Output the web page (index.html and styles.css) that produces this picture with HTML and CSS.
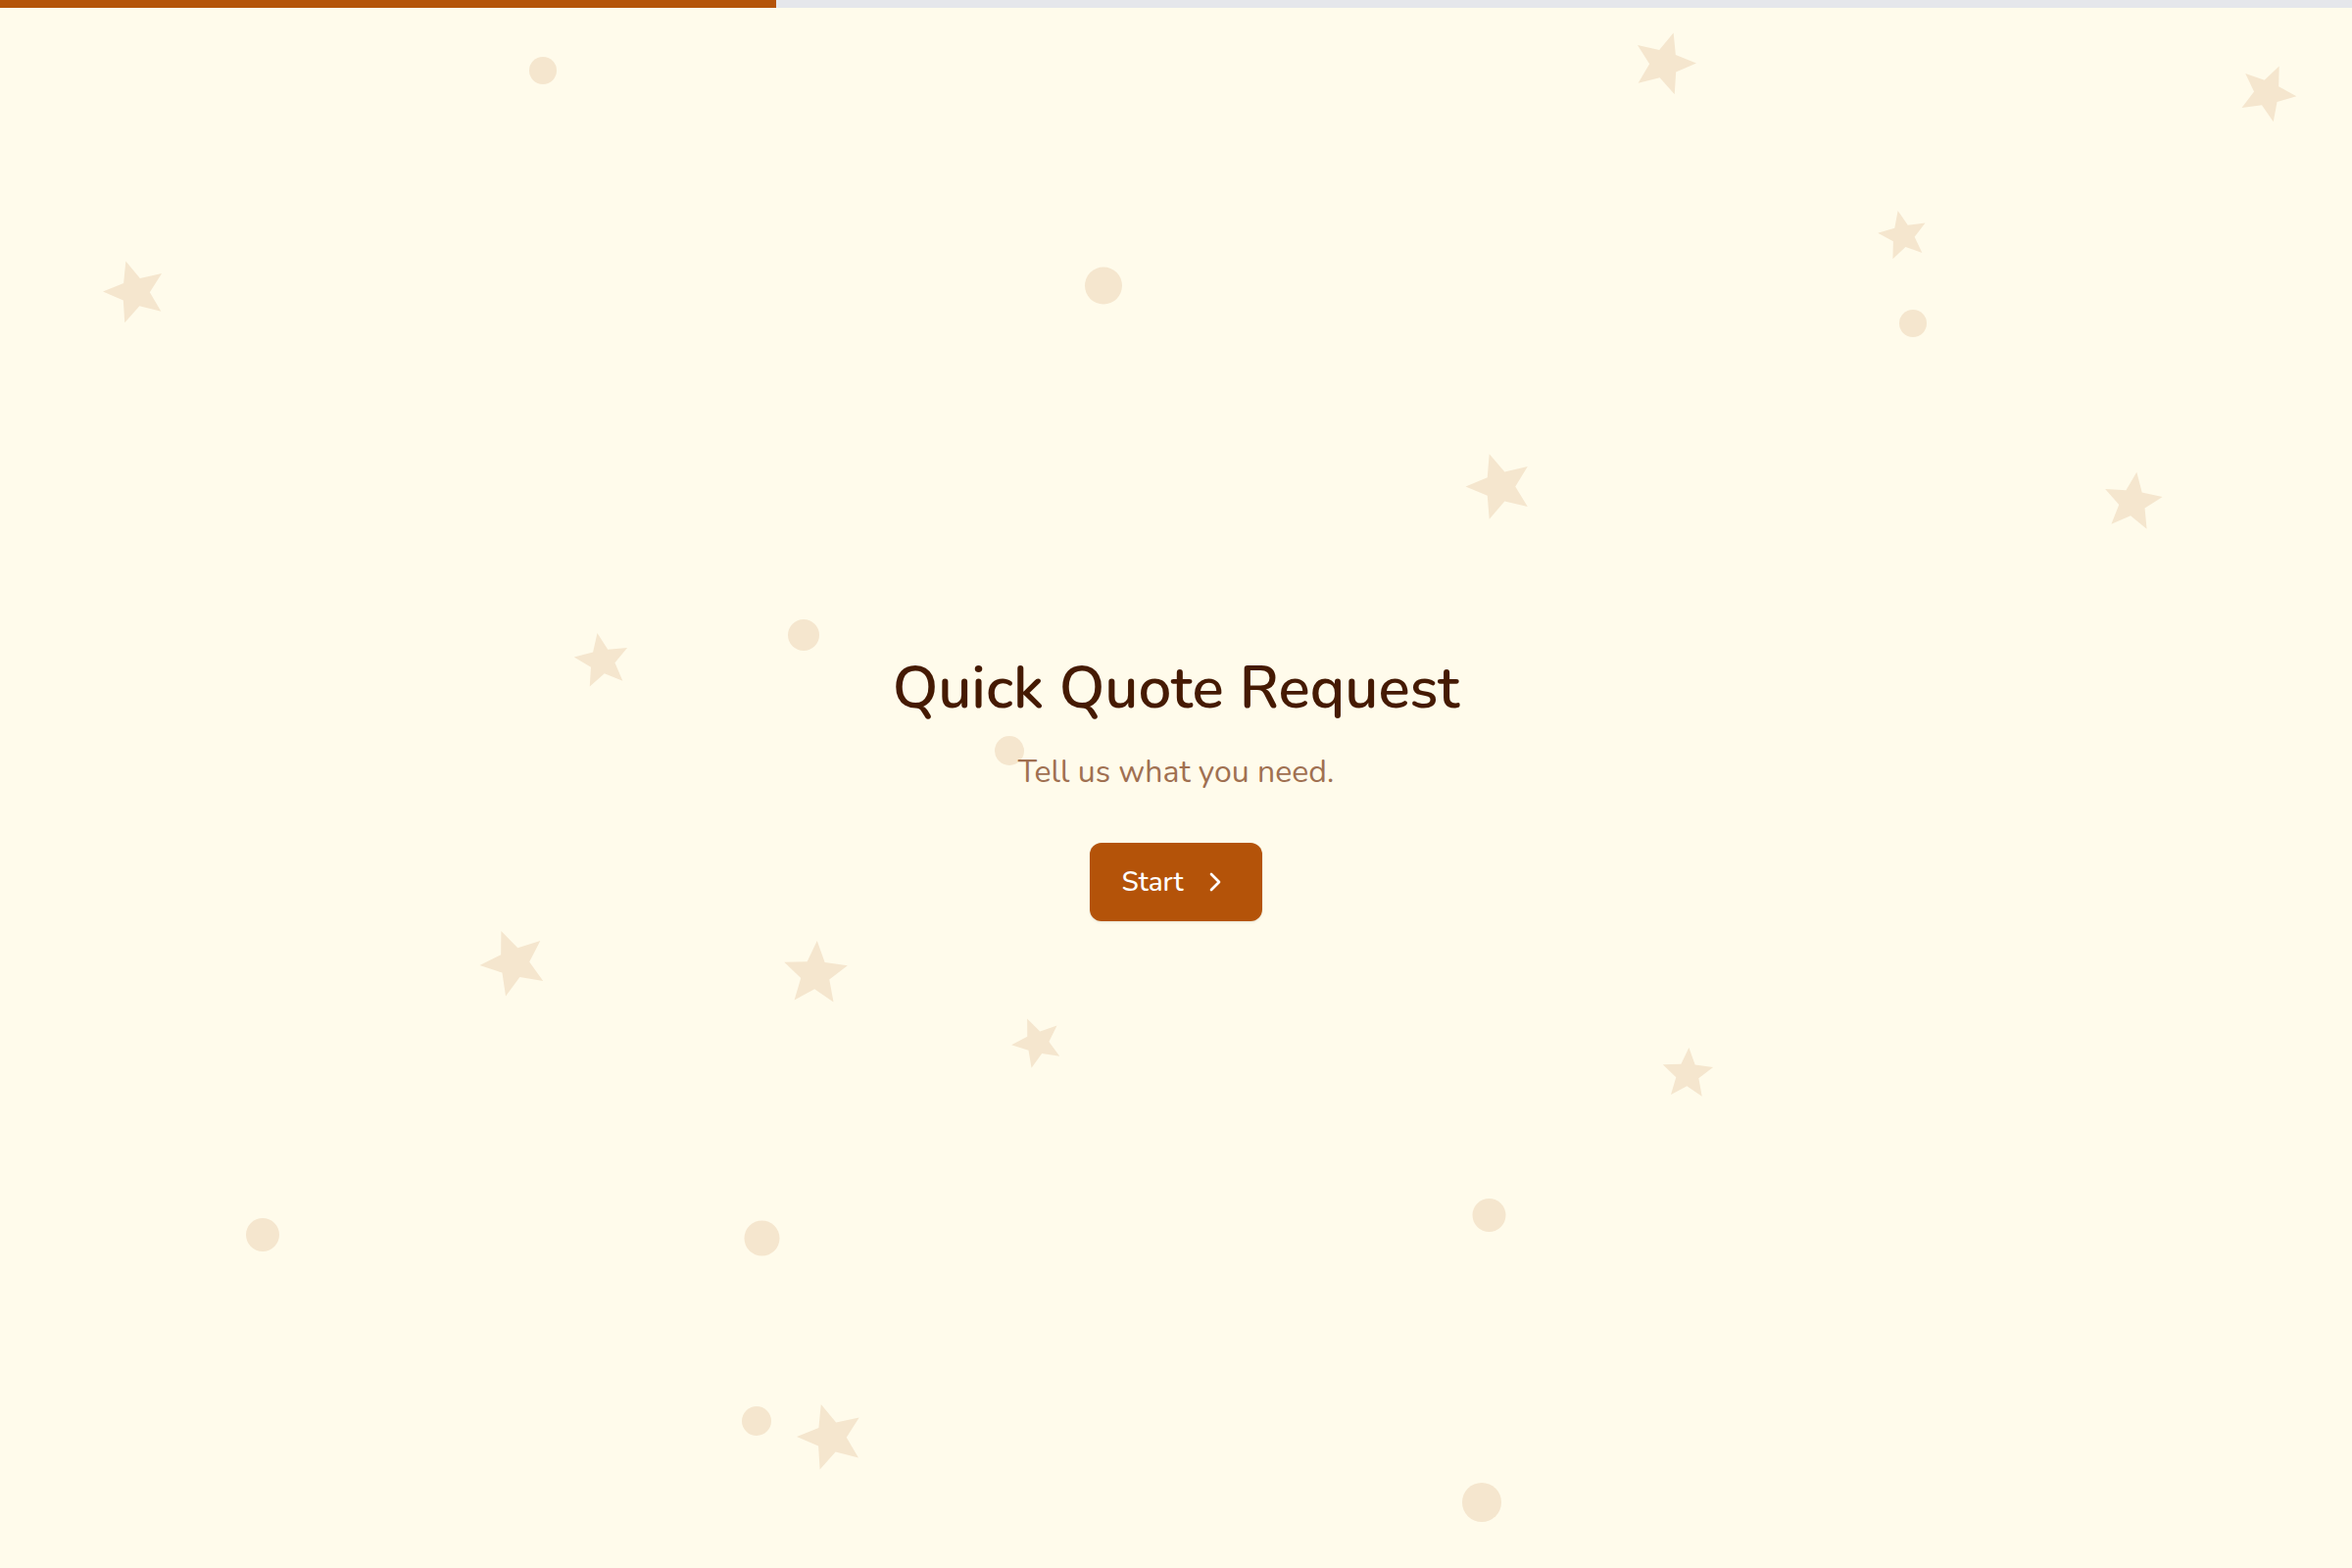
FILE: index.html
```html
<!DOCTYPE html>
<html lang="en">
<head>
<meta charset="utf-8">
<meta name="viewport" content="width=device-width, initial-scale=1">
<title>Quick Quote Request</title>
<link rel="stylesheet" href="styles.css">
</head>
<body>
<svg class="backdrop" viewBox="0 0 2400 1600" preserveAspectRatio="xMidYMid slice" aria-hidden="true">
  <defs>
    <polygon id="star" points="0,-100 26.5,-36.4 95.1,-30.9 42.8,13.9 58.8,80.9 0,45 -58.8,80.9 -42.8,13.9 -95.1,-30.9 -26.5,-36.4"/>
  </defs>
  <use href="#star" transform="translate(138 298) rotate(-17) scale(.33)"/>
  <use href="#star" transform="translate(1698 65) rotate(17) scale(.33)"/>
  <use href="#star" transform="translate(2313.5 95) rotate(24) scale(.3)"/>
  <use href="#star" transform="translate(1942 240.5) rotate(-12) scale(.26)"/>
  <use href="#star" transform="translate(1530.5 496.5) rotate(-18) scale(.35)"/>
  <use href="#star" transform="translate(2176 512.5) rotate(8) scale(.31)"/>
  <use href="#star" transform="translate(614.5 674.5) rotate(-10) scale(.29)"/>
  <use href="#star" transform="translate(524.5 982.5) rotate(-22) scale(.35)"/>
  <use href="#star" transform="translate(832 994) rotate(3) scale(.34)"/>
  <use href="#star" transform="translate(1058.5 1064) rotate(-23) scale(.265)"/>
  <use href="#star" transform="translate(1722 1096) rotate(3) scale(.27)"/>
  <use href="#star" transform="translate(848 1466.5) rotate(-17) scale(.35)"/>
  <circle cx="554" cy="72" r="14"/>
  <circle cx="1126" cy="291.5" r="19"/>
  <circle cx="1952" cy="330" r="14"/>
  <circle cx="820" cy="648" r="16"/>
  <circle cx="1030" cy="766" r="15"/>
  <circle cx="268" cy="1260" r="17"/>
  <circle cx="777.5" cy="1263.5" r="18"/>
  <circle cx="1519.5" cy="1240" r="17"/>
  <circle cx="772" cy="1450" r="15"/>
  <circle cx="1512" cy="1533" r="20"/>
</svg>
<div class="progress" role="progressbar" aria-label="Form progress" aria-valuemin="0" aria-valuemax="100" aria-valuenow="33">
  <div class="progress-fill" style="width: 33%"></div>
</div>
<main class="welcome">
  <h1 class="title">Quick Quote Request</h1>
  <p class="subtitle">Tell us what you need.</p>
  <button class="start" type="button">
    <span>Start</span>
    <svg class="chevron" viewBox="0 0 24 24" aria-hidden="true"><path d="m9 18 6-6-6-6"/></svg>
  </button>
</main>
</body>
</html>
```
FILE: styles.css
```css
* {
  box-sizing: border-box;
}

body {
  display: flex;
  flex-direction: column;
  min-height: 100vh;
  margin: 0;
  background: #fffbeb;
  color: #451a03;
  font-family: Nunito, "Open Sans", sans-serif;
}

.backdrop {
  position: absolute;
  inset: 0;
  z-index: -1;
  width: 100%;
  height: 100%;
  fill: #f5e6ce;
}

.progress {
  height: 8px;
  background: #e5e7eb;
}

.progress-fill {
  height: 100%;
  background: #b45309;
}

.welcome {
  display: flex;
  flex: 1;
  flex-direction: column;
  align-items: center;
  justify-content: center;
  padding: 32px 32px 34px;
  text-align: center;
}

.title {
  margin: 0 0 26px;
  font-size: 60px;
  font-weight: 600;
  line-height: 72px;
}

.subtitle {
  margin: 0 0 48px;
  color: #a07051;
  font-size: 32px;
  line-height: 48px;
}

.start {
  display: flex;
  align-items: center;
  gap: 16px;
  height: 80px;
  padding: 0 32px;
  border: 0;
  border-radius: 12px;
  background: #b45309;
  box-shadow: 0 1px 3px rgb(0 0 0 / 10%);
  color: #fff;
  font: inherit;
  font-size: 28px;
  font-weight: 500;
  cursor: pointer;
}

.chevron {
  width: 32px;
  height: 32px;
  fill: none;
  stroke: currentColor;
  stroke-width: 2;
  stroke-linecap: round;
  stroke-linejoin: round;
}
```
